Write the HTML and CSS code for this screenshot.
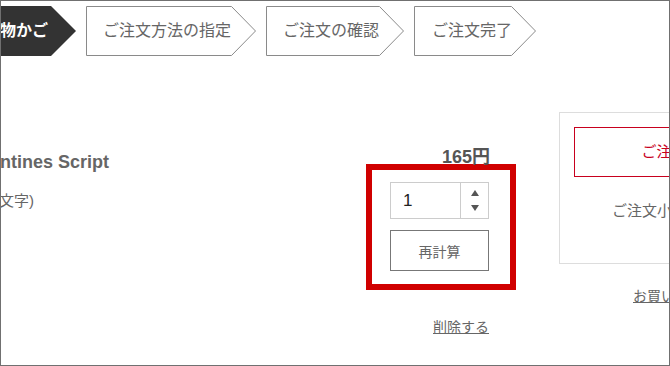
FILE: index.html
```html
<!DOCTYPE html>
<html lang="ja">
<head>
<meta charset="utf-8">
<title>お買い物かご</title>
<link rel="stylesheet" href="styles.css">
</head>
<body>
<div class="frame">
  <nav class="steps">
    <div class="step step-current">
      <svg class="step-shape" width="132" height="50" viewBox="0 0 132 50"><polygon points="0,0 107,0 132,25 107,50 0,50" fill="#333"/></svg>
      <span class="step-label">お買い物かご</span>
    </div>
    <div class="step step-2">
      <svg class="step-shape" width="170" height="50" viewBox="0 0 170 50"><polygon points="0.5,0.5 145.5,0.5 169.5,25 145.5,49.5 0.5,49.5" fill="#fff" stroke="#8a8a8a" stroke-width="1"/></svg>
      <span class="step-label">ご注文方法の指定</span>
    </div>
    <div class="step step-3">
      <svg class="step-shape" width="138" height="50" viewBox="0 0 138 50"><polygon points="0.5,0.5 113.5,0.5 137.5,25 113.5,49.5 0.5,49.5" fill="#fff" stroke="#8a8a8a" stroke-width="1"/></svg>
      <span class="step-label">ご注文の確認</span>
    </div>
    <div class="step step-4">
      <svg class="step-shape" width="122" height="50" viewBox="0 0 122 50"><polygon points="0.5,0.5 97.5,0.5 121.5,25 97.5,49.5 0.5,49.5" fill="#fff" stroke="#8a8a8a" stroke-width="1"/></svg>
      <span class="step-label">ご注文完了</span>
    </div>
  </nav>

  <main class="main">
    <section class="cart">
      <div class="product">
        <div class="product-name">Valentines Script</div>
        <div class="product-note">(文字)</div>
      </div>
      <div class="qty-col">
        <div class="price">165円</div>
        <div class="highlight">
          <div class="qty">
            <span class="qty-value">1</span>
            <span class="qty-spin">
              <svg width="8" height="6" viewBox="0 0 8 6"><polygon points="4,0 8,6 0,6" fill="#555"/></svg>
              <svg width="8" height="6" viewBox="0 0 8 6"><polygon points="0,0 8,0 4,6" fill="#555"/></svg>
            </span>
          </div>
          <button class="recalc" type="button">再計算</button>
        </div>
        <div class="delete-row"><a class="delete" href="#">削除する</a></div>
      </div>
    </section>

    <aside class="summary">
      <div class="summary-box">
        <div class="checkout">ご注文手続きへ</div>
        <div class="subtotal">ご注文小計</div>
      </div>
      <div class="continue-row"><a class="continue" href="#">お買い物を続ける</a></div>
    </aside>
  </main>
</div>
</body>
</html>
```

FILE: styles.css
```css
* { box-sizing: border-box; }

html, body {
  margin: 0;
  padding: 0;
  background: #fff;
}

body {
  font-family: "Liberation Sans", "Noto Sans CJK JP", sans-serif;
  color: #666;
}

.frame {
  width: 670px;
  height: 366px;
  border: 1px solid #707070;
  overflow: hidden;
  background: #fff;
}

/* steps */
.steps {
  display: flex;
  gap: 10px;
  margin-top: 5px;
  height: 50px;
}

.step {
  position: relative;
  flex: 0 0 auto;
  height: 50px;
  display: flex;
  align-items: center;
  padding-left: 17px;
}

.step-shape {
  position: absolute;
  left: 0;
  top: 0;
  display: block;
}

.step-label {
  position: relative;
  font-size: 16px;
  line-height: 20px;
  color: #666;
  white-space: nowrap;
}

.step-current {
  width: 132px;
  margin-left: -57px;
  padding-left: 8px;
}

.step-current .step-label {
  color: #fff;
  font-weight: 700;
}

.step-2 { width: 170px; }
.step-3 { width: 138px; }
.step-4 { width: 122px; padding-left: 18px; }

/* main */
.main {
  display: flex;
  margin-top: 56px;
}

.cart {
  flex: 0 0 558px;
  display: flex;
}

.product {
  flex: 1 1 auto;
  padding-top: 40px;
  white-space: nowrap;
}

.product-name {
  font-size: 18px;
  line-height: 20px;
  font-weight: 700;
  color: #666;
  margin-left: -37px;
}

.product-note {
  font-size: 15px;
  line-height: 20px;
  color: #666;
  margin-top: 19px;
  margin-left: -7px;
}

.qty-col {
  flex: 0 0 150px;
  margin-right: 43px;
  padding-top: 36px;
}

.price {
  font-size: 18px;
  line-height: 18px;
  font-weight: 700;
  color: #555;
  text-align: right;
  padding-right: 26px;
}

.highlight {
  margin-top: -2px;
  border: 6px solid #d00000;
  padding: 12px 21px 13px 18px;
}

.qty {
  display: flex;
  height: 37px;
  border: 1px solid #ccc;
  background: #fff;
}

.qty-value {
  flex: 1 1 auto;
  padding-left: 12px;
  font-size: 17px;
  line-height: 35px;
  color: #222;
}

.qty-spin {
  flex: 0 0 28px;
  border-left: 1px solid #ccc;
  display: flex;
  flex-direction: column;
  align-items: center;
  justify-content: center;
  gap: 9px;
}

.qty-spin svg { display: block; }

.recalc {
  display: block;
  width: 100%;
  height: 41px;
  margin-top: 11px;
  border: 1px solid #777;
  background: #fff;
  font-family: "Liberation Sans", "Noto Sans CJK JP", sans-serif;
  font-size: 14px;
  color: #666;
  padding: 0;
}

.delete-row {
  margin-top: 28px;
  text-align: right;
  padding-right: 27px;
  line-height: 18px;
}

.delete {
  font-size: 14px;
  color: #666;
  text-decoration: underline;
}

/* summary */
.summary {
  flex: 0 0 290px;
}

.summary-box {
  height: 152px;
  border: 1px solid #ddd;
  padding: 14px;
}

.checkout {
  width: 240px;
  height: 50px;
  border: 1px solid #c8001e;
  color: #c8001e;
  font-size: 15px;
  line-height: 48px;
  text-align: center;
}

.subtotal {
  margin-top: 24px;
  padding-left: 38px;
  font-size: 15px;
  line-height: 20px;
  color: #666;
}

.continue-row {
  margin-top: 23px;
  padding-left: 74px;
  line-height: 18px;
}

.continue {
  font-size: 14px;
  color: #666;
  text-decoration: underline;
  white-space: nowrap;
}
```
